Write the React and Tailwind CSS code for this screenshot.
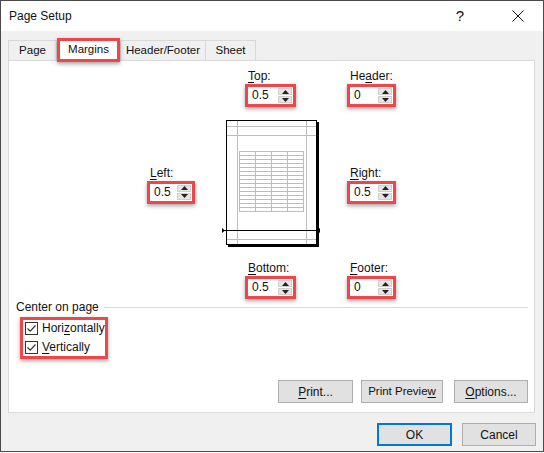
import React from 'react';

const redBox = 'border-[3px] border-[#ee474b] shadow-[0_2px_4px_rgba(0,0,0,0.35)]';

const Key = ({ children }) => <span className="underline underline-offset-[2px]">{children}</span>;

const Spin = ({ value, w }) => (
  <div className={`flex h-[23px] bg-white ${redBox} ${w}`}>
    <div className="flex-1 pl-[4px] text-[12px] leading-[17px]">{value}</div>
    <div className="flex w-[15px] flex-col gap-px py-px pr-px">
      <div className="flex flex-1 items-center justify-center border border-[#d0d0d0] bg-[#e5e5e5]">
        <svg width="7" height="4" viewBox="0 0 7 4">
          <path d="M0 4 L3.5 0 L7 4 Z" fill="#222" />
        </svg>
      </div>
      <div className="flex flex-1 items-center justify-center border border-[#d0d0d0] bg-[#e5e5e5]">
        <svg width="7" height="4" viewBox="0 0 7 4">
          <path d="M0 0 L3.5 4 L7 0 Z" fill="#222" />
        </svg>
      </div>
    </div>
  </div>
);

const Field = ({ label, value, w }) => (
  <div className="flex flex-col">
    <div className="pl-[3px] text-[12px] leading-[16px]">{label}</div>
    <Spin value={value} w={w} />
  </div>
);

const PagePreview = () => {
  const rows = [];
  for (let i = 0; i <= 15; i++) rows.push(31.5 + i * 4);
  const cols = [20.5, 36.5, 52.5, 68.5, 84.5];
  return (
    <svg width="104" height="128" viewBox="0 0 104 128">
      <rect x="7.5" y="0.5" width="90" height="124" fill="#fff" stroke="#000" />
      <rect x="98" y="2" width="2" height="125" fill="#000" />
      <rect x="9" y="125" width="91" height="2" fill="#000" />
      <g stroke="#bdbdbd" strokeWidth="1">
        <line x1="18.5" y1="1" x2="18.5" y2="124" />
        <line x1="87.5" y1="1" x2="87.5" y2="124" />
        <line x1="8" y1="6.5" x2="97" y2="6.5" />
        <line x1="8" y1="15.5" x2="97" y2="15.5" />
        <line x1="8" y1="119.5" x2="97" y2="119.5" />
        {rows.map((y) => (
          <line key={y} x1="20" y1={y} x2="85" y2={y} />
        ))}
        {cols.map((x) => (
          <line key={x} x1={x} y1="31" x2={x} y2="92" />
        ))}
      </g>
      <line x1="3" y1="110.5" x2="101" y2="110.5" stroke="#000" />
      <path d="M3 108 L6 110.5 L3 113 Z" fill="#000" />
      <path d="M101 108 L98 110.5 L101 113 Z" fill="#000" />
    </svg>
  );
};

const Check = ({ children }) => (
  <div className="flex h-[16px] items-center gap-[4px]">
    <div className="flex h-[13px] w-[13px] items-center justify-center border border-[#333] bg-white">
      <svg width="11" height="11" viewBox="0 0 11 11">
        <path d="M1.5 5.5 L4.2 8.2 L9.5 2.5" fill="none" stroke="#333" strokeWidth="1.2" />
      </svg>
    </div>
    <span className="text-[12px] leading-[16px]">{children}</span>
  </div>
);

const Btn = ({ children, w, primary }) => (
  <div
    className={`flex h-[23px] items-center justify-center bg-[#e1e1e1] text-[12px] ${w} ${
      primary ? 'border-2 border-[#0078d7]' : 'border border-[#adadad]'
    }`}
  >
    {children}
  </div>
);

const Tab = ({ children, w }) => (
  <div
    className={`flex h-[20px] items-center justify-center border border-b-0 border-[#d9d9d9] bg-[#f0f0f0] text-[11.5px] ${w}`}
  >
    {children}
  </div>
);

export default function App() {
  return (
    <div className="h-[452px] w-[544px] border border-[#4a4a4a] bg-[#f0f0f0] font-['Liberation_Sans',Arial,sans-serif] text-[#111]">
      {/* Title bar */}
      <div className="flex h-[30px] items-center bg-white">
        <div className="pl-[8px] text-[12px]">Page Setup</div>
        <div className="ml-auto flex h-full w-[46px] items-center justify-center text-[15px] font-light">?</div>
        <div className="ml-[12px] mr-[2px] flex h-full w-[46px] items-center justify-center">
          <svg width="12" height="12" viewBox="0 0 12 12">
            <path d="M0.5 0.5 L11.5 11.5 M11.5 0.5 L0.5 11.5" stroke="#111" strokeWidth="1" />
          </svg>
        </div>
      </div>

      {/* Tabs */}
      <div className="flex items-end pl-[7px] pt-[7px]">
        <Tab w="w-[49px]">Page</Tab>
        <div
          className={`relative z-10 -mb-[2px] flex h-[24px] w-[63px] items-center justify-center bg-white text-[11.5px] ${redBox}`}
        >
          Margins
        </div>
        <Tab w="w-[86px]">Header/Footer</Tab>
        <Tab w="w-[50px] border-l-0">Sheet</Tab>
      </div>

      {/* Panel */}
      <div className="ml-[7px] w-[527px] border border-[#d9d9d9] bg-white pb-[9px] pt-[7px]">
        <div className="ml-[236px] flex">
          <div className="w-[102px]">
            <Field label={<><Key>T</Key>op:</>} value="0.5" w="w-[51px]" />
          </div>
          <Field label={<>He<Key>a</Key>der:</>} value="0" w="w-[49px]" />
        </div>

        <div className="ml-[138px] mt-[13px] flex items-center">
          <div className="w-[72px]">
            <Field label={<><Key>L</Key>eft:</>} value="0.5" w="w-[48px]" />
          </div>
          <PagePreview />
          <div className="ml-[24px]">
            <Field label={<><Key>R</Key>ight:</>} value="0.5" w="w-[49px]" />
          </div>
        </div>

        <div className="ml-[236px] mt-[12px] flex">
          <div className="w-[102px]">
            <Field label={<><Key>B</Key>ottom:</>} value="0.5" w="w-[51px]" />
          </div>
          <Field label={<><Key>F</Key>ooter:</>} value="0" w="w-[49px]" />
        </div>

        <div className="ml-[7px] mr-[6px] flex h-[16px] items-center">
          <span className="text-[12px] leading-[16px]">Center on page</span>
          <div className="ml-[5px] h-px flex-1 bg-[#dcdcdc]" />
        </div>

        <div className={`ml-[11px] mt-[2px] flex h-[42px] w-[88px] flex-col gap-[3px] bg-white pl-[2px] ${redBox}`}>
          <Check>Hori<Key>z</Key>ontally</Check>
          <Check><Key>V</Key>ertically</Check>
        </div>

        <div className="mt-[21px] flex justify-end pr-[6px]">
          <Btn w="w-[75px]"><span><Key>P</Key>rint...</span></Btn>
          <div className="ml-[8px]">
            <Btn w="w-[82px]"><span className="text-[11.5px]">Print Previe<Key>w</Key></span></Btn>
          </div>
          <div className="ml-[11px]">
            <Btn w="w-[74px]"><span><Key>O</Key>ptions...</span></Btn>
          </div>
        </div>
      </div>

      {/* Dialog buttons */}
      <div className="mt-[10px] flex justify-end gap-[10px] pr-[7px]">
        <Btn w="w-[75px]" primary>OK</Btn>
        <Btn w="w-[74px]">Cancel</Btn>
      </div>
    </div>
  );
}
